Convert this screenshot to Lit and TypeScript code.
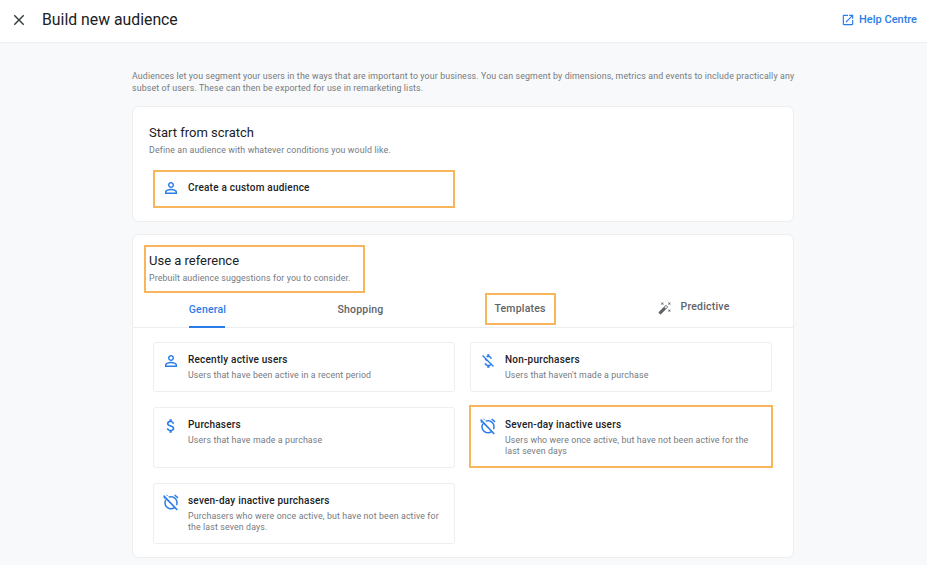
import { LitElement, html, css, svg } from 'lit';
import { customElement } from 'lit/decorators.js';
import { classMap } from 'lit/directives/class-map.js';

const ICONS = {
  close: svg`<path d="M19 6.41L17.59 5 12 10.59 6.41 5 5 6.41 10.59 12 5 17.59 6.41 19 12 13.41 17.59 19 19 17.59 13.41 12z"/>`,
  open: svg`<path d="M19 19H5V5h7V3H5c-1.11 0-2 .9-2 2v14c0 1.1.89 2 2 2h14c1.1 0 2-.9 2-2v-7h-2v7zM14 3v2h3.59l-9.83 9.83 1.41 1.41L19 6.41V10h2V3h-7z"/>`,
  person: svg`<path d="M12 5.9c1.16 0 2.1.94 2.1 2.1s-.94 2.1-2.1 2.1S9.9 9.16 9.9 8s.94-2.1 2.1-2.1m0 9c2.97 0 6.1 1.46 6.1 2.1v1.1H5.9V17c0-.64 3.13-2.1 6.1-2.1M12 4C9.79 4 8 5.79 8 8s1.79 4 4 4 4-1.79 4-4-1.79-4-4-4zm0 9c-2.67 0-8 1.34-8 4v3h16v-3c0-2.66-5.33-4-8-4z"/>`,
  money: svg`<path d="M11.8 10.9c-2.27-.59-3-1.2-3-2.15 0-1.09 1.01-1.85 2.7-1.85 1.78 0 2.44.85 2.5 2.1h2.21c-.07-1.72-1.12-3.3-3.21-3.81V3h-3v2.16c-1.94.42-3.5 1.68-3.5 3.61 0 2.31 1.91 3.46 4.7 4.13 2.5.6 3 1.48 3 2.41 0 .69-.49 1.79-2.7 1.79-2.06 0-2.87-.92-2.98-2.1h-2.2c.12 2.19 1.76 3.42 3.68 3.83V21h3v-2.15c1.95-.37 3.5-1.5 3.5-3.55 0-2.84-2.43-3.81-4.7-4.4z"/>`,
  moneyOff: svg`<path d="M12.5 6.9c1.78 0 2.44.85 2.5 2.1h2.21c-.07-1.72-1.12-3.3-3.21-3.81V3h-3v2.16c-.53.12-1.03.3-1.48.54l1.47 1.47c.41-.17.91-.27 1.51-.27zM5.33 4.06L4.06 5.33 7.5 8.77c0 2.08 1.56 3.21 3.91 3.91l3.51 3.51c-.34.48-1.05.91-2.42.91-2.06 0-2.87-.92-2.98-2.1h-2.2c.12 2.19 1.76 3.42 3.68 3.83V21h3v-2.15c.96-.18 1.82-.55 2.45-1.12l2.22 2.22 1.27-1.27L5.33 4.06z"/>`,
  alarmOff: svg`<path d="M12 6c3.87 0 7 3.13 7 7 0 .84-.16 1.65-.43 2.4l1.52 1.52c.58-1.19.91-2.51.91-3.92 0-4.97-4.03-9-9-9-1.41 0-2.73.33-3.92.91L9.6 6.43C10.35 6.16 11.16 6 12 6zm10-.28l-4.6-3.86-1.29 1.53 4.6 3.86L22 5.72zM2.81 2.81L1.39 4.22l1.46 1.46-.99.82 1.42 1.42.99-.82.8.8C3.53 9.42 3 11.15 3 13c0 4.97 4.03 9 9 9 1.85 0 3.58-.55 5.02-1.5l2.76 2.76 1.41-1.41L2.81 2.81zM12 20c-3.87 0-7-3.13-7-7 0-1.29.35-2.49.96-3.52l9.56 9.56c-1.03.61-2.23.96-3.52.96zM7.88 3.39L6.6 1.86l-.99.83 1.42 1.42.85-.72z"/>`,
  wand: svg`<path d="M7.5 5.6L10 7 8.6 4.5 10 2 7.5 3.4 5 2l1.4 2.5L5 7zm12 9.8L17 14l1.4 2.5L17 19l2.5-1.4L22 19l-1.4-2.5L22 14zM22 2l-2.5 1.4L17 2l1.4 2.5L17 7l2.5-1.4L22 7l-1.4-2.5zm-7.63 5.29c-.39-.39-1.02-.39-1.41 0L1.29 18.96c-.39.39-.39 1.02 0 1.41l2.34 2.34c.39.39 1.02.39 1.41 0L16.7 11.05c.39-.39.39-1.02 0-1.41l-2.33-2.35zm-1.03 5.49l-2.12-2.12 2.44-2.44 2.12 2.12-2.44 2.44z"/>`,
};

type IconName = keyof typeof ICONS;

const icon = (name: IconName, cls = '') =>
  html`<svg class="icon ${cls}" viewBox="0 0 24 24">${ICONS[name]}</svg>`;

const REFERENCES: { icon: IconName; title: string; text: string; marked?: boolean }[] = [
  { icon: 'person', title: 'Recently active users', text: 'Users that have been active in a recent period' },
  { icon: 'moneyOff', title: 'Non-purchasers', text: "Users that haven't made a purchase" },
  { icon: 'money', title: 'Purchasers', text: 'Users that have made a purchase' },
  {
    icon: 'alarmOff',
    title: 'Seven-day inactive users',
    text: 'Users who were once active, but have not been active for the last seven days',
    marked: true,
  },
  {
    icon: 'alarmOff',
    title: 'seven-day inactive purchasers',
    text: 'Purchasers who were once active, but have not been active for the last seven days.',
  },
];

@customElement('app-root')
export class AppRoot extends LitElement {
  static styles = css`
    :host {
      display: block;
      width: 927px;
      height: 565px;
      overflow: hidden;
      background: #f8f9fa;
      font-family: Roboto, 'Liberation Sans', sans-serif;
      color: #202124;
    }

    * {
      box-sizing: border-box;
    }

    .icon {
      display: block;
      width: 18px;
      height: 18px;
      flex: none;
      fill: #2a7de9;
    }

    header {
      display: flex;
      align-items: center;
      height: 43px;
      padding: 0 10px 3px 10px;
      background: #fff;
      border-bottom: 1px solid #eceef0;
    }

    header .close {
      fill: #3c4043;
    }

    h1 {
      margin: 0 0 0 14px;
      font-size: 15.8px;
      font-weight: 400;
      flex: 1;
    }

    .help {
      display: flex;
      align-items: center;
      gap: 4px;
      font-size: 11px;
      font-weight: 500;
      color: #2a7de9;
    }

    .help .icon {
      width: 14px;
      height: 14px;
    }

    main {
      width: 662px;
      margin-left: 132px;
      padding-top: 27px;
    }

    .intro {
      margin: 0 0 12px;
      font-size: 8.8px;
      line-height: 12px;
      letter-spacing: 0.13px;
      color: #757a7f;
      white-space: nowrap;
    }

    .card {
      background: #fff;
      border: 1px solid #eceef0;
      border-radius: 6px;
    }

    .scratch {
      height: 116px;
      padding: 17px 21px 0 16px;
      margin-bottom: 12px;
    }

    h2 {
      margin: 0;
      font-size: 13px;
      line-height: 17px;
      font-weight: 400;
    }

    .sub {
      margin: 3px 0 0;
      font-size: 8.8px;
      line-height: 12px;
      letter-spacing: 0.13px;
      color: #757a7f;
    }

    .marked {
      border: 2px solid #f9b55b;
    }

    .custom {
      display: flex;
      align-items: flex-start;
      gap: 8px;
      width: 302px;
      height: 38px;
      margin: 14px 0 0 4px;
      padding: 7px 0 0 7px;
    }

    .name {
      font-size: 10px;
      line-height: 14px;
      font-weight: 500;
      letter-spacing: 0.22px;
      color: #202124;
    }

    .custom .name {
      margin-top: 2px;
    }

    .reference {
      height: 324px;
    }

    .reference-head {
      width: 221px;
      height: 48px;
      margin: 10px 0 0 11px;
      padding: 5px 0 0 3px;
    }

    .tabs {
      display: grid;
      grid-template-columns: 149px 157px 162px 168px;
      height: 35px;
      border-bottom: 1px solid #eceef0;
    }

    .tab {
      position: relative;
      display: flex;
      justify-content: center;
      align-items: flex-start;
      padding-top: 10px;
      font-size: 10.5px;
      line-height: 14px;
      font-weight: 500;
      letter-spacing: 0.2px;
      color: #5f6368;
    }

    .tab.active {
      color: #2a7de9;
    }

    .tab.active::after {
      content: '';
      position: absolute;
      left: 56px;
      bottom: -1px;
      width: 36px;
      height: 2px;
      background: #2a7de9;
    }

    .tab.templates span {
      width: 71px;
      height: 32px;
      margin-top: -10px;
      padding-top: 7px;
      text-align: center;
    }

    .tab.predictive {
      gap: 9px;
      padding-top: 7px;
      padding-left: 17px;
    }

    .tab.predictive .icon {
      width: 14px;
      height: 14px;
      margin-top: 1px;
      fill: #5f6368;
    }

    .grid {
      display: grid;
      grid-template-columns: 302px 302px;
      grid-template-rows: 50px 61px 61px;
      gap: 15px;
      padding: 14px 0 0 20px;
    }

    .item {
      display: flex;
      gap: 8px;
      padding: 9px 8px 0 8px;
      border: 1px solid #eceef0;
      border-radius: 3px;
    }

    .item .name {
      margin-top: 1px;
    }

    .item.marked {
      margin: -2px -1px 0;
      border: 2px solid #f9b55b;
      border-radius: 0;
      padding: 10px 8px 0 8px;
    }

    .item .text {
      margin: 3px 0 0;
      font-size: 8.8px;
      line-height: 11px;
      letter-spacing: 0.13px;
      color: #757a7f;
    }
  `;

  render() {
    return html`
      <header>
        ${icon('close', 'close')}
        <h1>Build new audience</h1>
        <div class="help">${icon('open')}Help Centre</div>
      </header>
      <main>
        <p class="intro">
          Audiences let you segment your users in the ways that are important to your business. You can segment by
          dimensions, metrics and events to include practically any<br />subset of users. These can then be exported
          for use in remarketing lists.
        </p>
        <section class="card scratch">
          <h2>Start from scratch</h2>
          <p class="sub">Define an audience with whatever conditions you would like.</p>
          <div class="custom marked">${icon('person')}<span class="name">Create a custom audience</span></div>
        </section>
        <section class="card reference">
          <div class="reference-head marked">
            <h2>Use a reference</h2>
            <p class="sub">Prebuilt audience suggestions for you to consider.</p>
          </div>
          <div class="tabs">
            <div class="tab active">General</div>
            <div class="tab">Shopping</div>
            <div class="tab templates"><span class="marked">Templates</span></div>
            <div class="tab predictive">${icon('wand')}Predictive</div>
          </div>
          <div class="grid">
            ${REFERENCES.map(
              (r) => html`
                <div class=${classMap({ item: true, marked: !!r.marked })}>
                  ${icon(r.icon)}
                  <div>
                    <div class="name">${r.title}</div>
                    <p class="text">${r.text}</p>
                  </div>
                </div>
              `
            )}
          </div>
        </section>
      </main>
    `;
  }
}
